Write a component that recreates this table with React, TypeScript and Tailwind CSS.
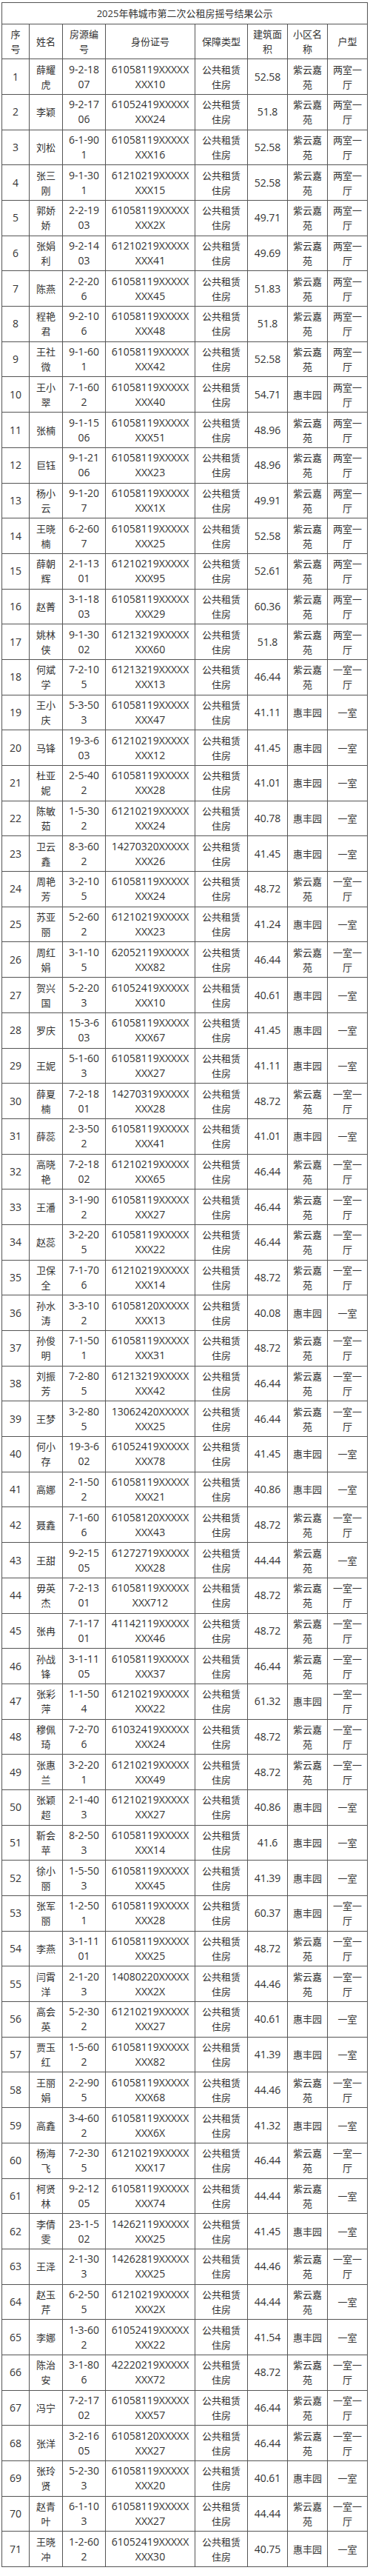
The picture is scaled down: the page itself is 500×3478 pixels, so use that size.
import React from "react";

const RAW = `薛耀虎,9-2-1807,61058119,10,52.58,z,2
李颖,9-2-1706,61052419,24,51.8,z,2
刘松,6-1-901,61058119,16,52.58,z,2
张三刚,9-1-301,61210219,15,52.58,z,2
郭娇娇,2-2-1903,61058119,2X,49.71,z,2
张娟利,9-2-1403,61210219,41,49.69,z,2
陈燕,2-2-206,61058119,45,51.83,z,2
程艳君,9-2-106,61058119,48,51.8,z,2
王社微,9-1-601,61058119,42,52.58,z,2
王小翠,7-1-602,61058119,40,54.71,h,2
张楠,9-1-1506,61058119,51,48.96,z,2
巨钰,9-1-2106,61058119,23,48.96,z,2
杨小云,9-1-207,61058119,1X,49.91,z,2
王晓楠,6-2-607,61058119,25,52.58,z,2
薛朝辉,2-1-1301,61210219,95,52.61,z,2
赵菁,3-1-1803,61058119,29,60.36,z,2
姚林侠,9-1-3002,61213219,60,51.8,z,2
何斌学,7-2-105,61213219,13,46.44,z,1
王小庆,5-3-503,61058119,47,41.11,h,0
马锋,19-3-603,61210219,12,41.45,h,0
杜亚妮,2-5-402,61058119,28,41.01,h,0
陈敏茹,1-5-302,61210219,24,40.78,h,0
卫云鑫,8-3-602,14270320,26,41.45,h,0
周艳芳,3-2-105,61058119,24,48.72,z,1
苏亚丽,5-2-602,61210219,23,41.24,h,0
周红娟,3-1-105,62052119,82,46.44,z,1
贺兴国,5-2-203,61052419,10,40.61,h,0
罗庆,15-3-603,61058119,67,41.45,h,0
王妮,5-1-603,61058119,27,41.11,h,0
薛夏楠,7-2-1801,14270319,28,48.72,z,1
薛蕊,2-3-502,61058119,41,41.01,h,0
高晓艳,7-2-1802,61210219,65,46.44,z,1
王潘,3-1-902,61058119,27,46.44,z,1
赵蕊,3-2-205,61058119,22,46.44,z,1
卫保全,7-1-706,61210219,14,48.72,z,1
孙水涛,3-3-102,61058120,13,40.08,h,0
孙俊明,7-1-501,61058119,31,48.72,z,1
刘振芳,7-2-805,61213219,42,46.44,z,1
王梦,3-2-805,13062420,25,46.44,z,1
何小存,19-3-602,61052419,78,41.45,h,0
高娜,2-1-502,61058119,21,40.86,h,0
聂鑫,7-1-606,61058120,43,48.72,z,1
王甜,9-2-1505,61272719,28,44.44,z,0
毋英杰,7-2-1301,61058119,712,48.72,z,1
张冉,7-1-1701,41142119,46,48.72,z,1
孙战锋,3-1-1105,61058119,37,46.44,z,1
张彩萍,1-1-504,61210219,22,61.32,h,1
穆佩琦,7-2-706,61032419,24,48.72,z,1
张惠兰,3-2-201,61210219,49,48.72,z,1
张颖超,2-1-403,61210219,27,40.86,h,0
靳会苹,8-2-503,61058119,14,41.6,h,0
徐小丽,1-5-503,61058119,45,41.39,h,0
张军丽,1-2-501,61058119,28,60.37,h,1
李燕,3-1-1101,61058119,25,48.72,z,1
闫霄洋,2-1-203,14080220,2X,44.46,z,1
高会英,5-2-302,61210219,27,40.61,h,0
贾玉红,1-5-602,61058119,82,41.39,h,0
王丽娟,2-2-905,61058119,68,44.46,z,1
高鑫,3-4-602,61058119,6X,41.32,h,0
杨海飞,7-2-305,61210219,17,46.44,z,1
柯贤林,9-2-1205,61058119,74,44.44,z,0
李倩雯,23-1-502,14262119,25,41.45,h,0
王泽,2-1-303,14262819,25,44.46,z,1
赵玉芹,6-2-505,61210219,2X,44.44,z,0
李娜,1-3-602,61052419,22,41.54,h,0
陈治安,3-1-806,42220219,72,48.72,z,1
冯宁,7-2-1702,61058119,57,46.44,z,1
张洋,3-2-1605,61058120,27,46.44,z,1
张玲贤,5-2-303,61058119,20,40.61,h,0
赵青叶,6-1-103,61058119,27,44.44,z,1
王晓冲,1-2-602,61052419,30,40.75,h,0`;

const COMM: Record<string, string> = { z: "紫云嘉苑", h: "惠丰园" };
const TYPE: Record<string, string> = { "2": "两室一厅", "1": "一室一厅", "0": "一室" };

type Row = {
  no: string;
  name: string;
  house: string;
  id: string;
  area: string;
  comm: string;
  type: string;
};

const rows: Row[] = RAW.split("\n").map((line, i) => {
  const [name, house, pre, suf, area, c, t] = line.split(",");
  return {
    no: String(i + 1),
    name,
    house,
    id: pre + "XXXXXXXX" + suf,
    area,
    comm: COMM[c],
    type: TYPE[t],
  };
});

function chunks(s: string, n: number): string[] {
  const out: string[] = [];
  for (let i = 0; i < s.length; i += n) out.push(s.slice(i, i + n));
  return out;
}

function Cell({ text, n, cjk }: { text: string; n: number; cjk?: boolean }) {
  return (
    <td
      className={`border border-[#555] p-0 text-center align-middle leading-[20px] ${
        cjk ? "text-[13px]" : "text-[14px]"
      }`}
    >
      {chunks(text, n).map((p, i) => (
        <span key={i} className="block whitespace-nowrap">
          {p}
        </span>
      ))}
    </td>
  );
}

export default function App() {
  return (
    <div className="w-[500px] min-h-[3478px] bg-white pt-[3px] pl-[2px] font-['Open_Sans','Noto_Sans_CJK_SC',sans-serif] text-[#333]">
      <table className="table-fixed border-collapse w-[494px]">
        <colgroup>
          <col className="w-[37px]" />
          <col className="w-[45px]" />
          <col className="w-[58px]" />
          <col className="w-[121px]" />
          <col className="w-[71px]" />
          <col className="w-[54px]" />
          <col className="w-[54px]" />
          <col className="w-[54px]" />
        </colgroup>
        <tbody>
          <tr className="h-[29px]">
            <td colSpan={8} className="border border-[#555] p-0 text-center align-middle text-[13px] leading-[20px]">
              2025年韩城市第二次公租房摇号结果公示
            </td>
          </tr>
          <tr className="h-[47.3px]">
            <Cell text="序号" n={1} cjk />
            <Cell text="姓名" n={2} cjk />
            <Cell text="房源编号" n={3} cjk />
            <Cell text="身份证号" n={4} cjk />
            <Cell text="保障类型" n={4} cjk />
            <Cell text="建筑面积" n={3} cjk />
            <Cell text="小区名称" n={3} cjk />
            <Cell text="户型" n={2} cjk />
          </tr>
          {rows.map((r) => (
            <tr key={r.no} className="h-[47.7px]">
              <Cell text={r.no} n={4} />
              <Cell text={r.name} n={2} cjk />
              <Cell text={r.house} n={6} />
              <Cell text={r.id} n={13} />
              <Cell text="公共租赁住房" n={4} cjk />
              <Cell text={r.area} n={8} />
              <Cell text={r.comm} n={3} cjk />
              <Cell text={r.type} n={3} cjk />
            </tr>
          ))}
        </tbody>
      </table>
    </div>
  );
}
